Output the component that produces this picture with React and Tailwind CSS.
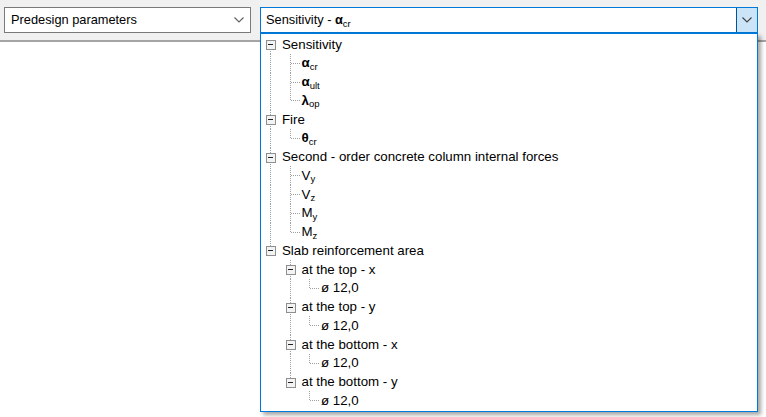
import React from 'react';

const FONT = { fontFamily: '"Liberation Sans", Arial, sans-serif' };

const Sym = ({ base, sub, bold }) => (
  <span>
    <span className={bold ? 'font-bold' : ''}>{base}</span>
    <sub className="text-[9.5px]">{sub}</sub>
  </span>
);

const tree = [
  {
    label: 'Sensitivity',
    children: [
      { label: <Sym base="α" sub="cr" bold /> },
      { label: <Sym base="α" sub="ult" bold /> },
      { label: <Sym base="λ" sub="op" bold /> },
    ],
  },
  {
    label: 'Fire',
    children: [{ label: <Sym base="θ" sub="cr" bold /> }],
  },
  {
    label: 'Second - order concrete column internal forces',
    children: [
      { label: <Sym base="V" sub="y" /> },
      { label: <Sym base="V" sub="z" /> },
      { label: <Sym base="M" sub="y" /> },
      { label: <Sym base="M" sub="z" /> },
    ],
  },
  {
    label: 'Slab reinforcement area',
    children: [
      { label: 'at the top - x', children: [{ label: 'ø 12,0' }] },
      { label: 'at the top - y', children: [{ label: 'ø 12,0' }] },
      { label: 'at the bottom - x', children: [{ label: 'ø 12,0' }] },
      { label: 'at the bottom - y', children: [{ label: 'ø 12,0' }] },
    ],
  },
];

// flatten tree into rows with guide info
function flatten(nodes, depth, guides, isRoot, out) {
  nodes.forEach((n, i) => {
    const hasNext = i < nodes.length - 1;
    const hasPrev = !(isRoot && i === 0);
    out.push({ label: n.label, depth, guides, hasNext, hasPrev, expandable: !!n.children });
    if (n.children) flatten(n.children, depth + 1, [...guides, hasNext], false, out);
  });
  return out;
}

const rows = flatten(tree, 0, [], true, []);

const W = 19.5;
const H = 18.75;
const CX = 9.5;
const CY = 9.5;
const LINE = '#a0a0a0';

function GuideCell({ full }) {
  return (
    <svg width={W} height={H} className="shrink-0 block" shapeRendering="crispEdges">
      {full && <line x1={CX} y1={0} x2={CX} y2={H} stroke={LINE} strokeDasharray="1 1" />}
    </svg>
  );
}

function NodeCell({ hasPrev, hasNext, expandable }) {
  return (
    <svg width={W} height={H} className="shrink-0 block" shapeRendering="crispEdges">
      {hasPrev && <line x1={CX} y1={0} x2={CX} y2={CY} stroke={LINE} strokeDasharray="1 1" />}
      {hasNext && <line x1={CX} y1={CY} x2={CX} y2={H} stroke={LINE} strokeDasharray="1 1" />}
      {!expandable && <line x1={CX} y1={CY} x2={W} y2={CY} stroke={LINE} strokeDasharray="1 1" />}
      {expandable && (
        <g>
          <rect x={CX - 4.5} y={CY - 4.5} width={9} height={9} fill="#f3f3f3" stroke="#8f8f8f" />
          <line x1={CX - 2.5} y1={CY} x2={CX + 2.5} y2={CY} stroke="#222" />
        </g>
      )}
    </svg>
  );
}

const Chevron = ({ color }) => (
  <svg width="10" height="6" viewBox="0 0 10 6">
    <polyline points="0.5,0.5 5,5 9.5,0.5" fill="none" stroke={color} strokeWidth="1.1" />
  </svg>
);

export default function App() {
  return (
    <div className="w-[766px] h-[417px] bg-white relative overflow-hidden text-black" style={FONT}>
      <div className="h-[42px] bg-[#f0f0f0] border-b-2 border-[#a5a5a5] flex items-start pt-[7px] pl-[4px] gap-[9px]">
        <div className="w-[247px] h-[26px] bg-white border border-[#7a7a7a] flex items-center pl-[6px] pr-[6px]">
          <span className="flex-1 text-[12.8px]">Predesign parameters</span>
          <Chevron color="#606060" />
        </div>
        <div className="w-[498px] h-[26px] bg-white border border-[#0078d7] flex items-stretch">
          <span className="flex-1 flex items-center pl-[5px] text-[12.8px]">
            Sensitivity -&nbsp;<Sym base="α" sub="cr" bold />
          </span>
          <div className="w-[21px] bg-[#cce4f7] border-l border-[#005499] flex items-center justify-center">
            <Chevron color="#404040" />
          </div>
        </div>
      </div>

      <div className="absolute left-[260px] top-[33px] w-[498px] h-[379px] bg-white border border-[#0078d7] shadow-[3px_3px_4px_rgba(0,0,0,0.35)] pt-[1px]">
        {rows.map((r, i) => (
          <div key={i} className="flex items-center" style={{ height: H }}>
            {r.guides.map((g, j) => (
              <GuideCell key={j} full={g} />
            ))}
            <NodeCell hasPrev={r.hasPrev} hasNext={r.hasNext} expandable={r.expandable} />
            <span className="pl-[1.5px] text-[13.3px] leading-none whitespace-nowrap">{r.label}</span>
          </div>
        ))}
      </div>
    </div>
  );
}
